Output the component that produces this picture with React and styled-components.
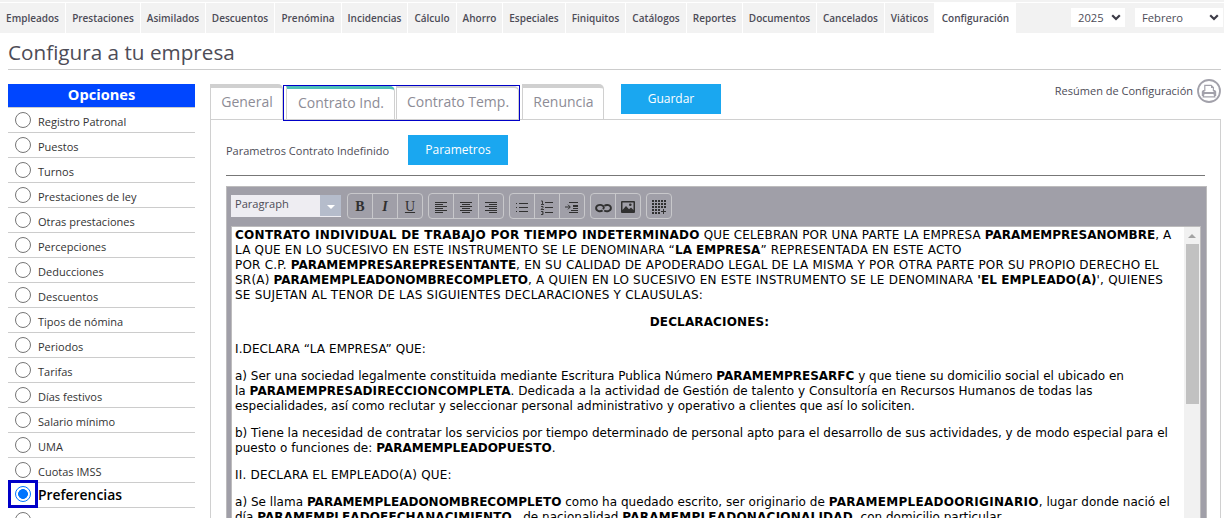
import React from "react";
import styled, { createGlobalStyle } from "styled-components";

const menu = [
    ['Empleados', 65], ['Prestaciones', 74], ['Asimilados', 64], ['Descuentos', 68],
    ['Prenómina', 66], ['Incidencias', 65], ['Cálculo', 48], ['Ahorro', 45],
    ['Especiales', 62], ['Finiquitos', 59], ['Catálogos', 60], ['Reportes', 55],
    ['Documentos', 73], ['Cancelados', 67], ['Viáticos', 49], ['Configuración', 81],
];

const options = [
    'Registro Patronal', 'Puestos', 'Turnos', 'Prestaciones de ley', 'Otras prestaciones',
    'Percepciones', 'Deducciones', 'Descuentos', 'Tipos de nómina', 'Periodos', 'Tarifas',
    'Días festivos', 'Salario mínimo', 'UMA', 'Cuotas IMSS', 'Preferencias', '',
];

const Arrow = () => (
    <svg width="10" height="7" viewBox="0 0 10 7">
        <path d="M1.2 1.2L5 5L8.8 1.2" fill="none" stroke="#3d3c47" strokeWidth="2.2" />
    </svg>
);

const Printer = () => (
    <svg width="24" height="24" viewBox="0 0 24 24">
        <circle cx="12" cy="12" r="11" fill="#fff" stroke="#a2a1aa" strokeWidth="1.8" />
        <path d="M7.8 12V6.3h6.4l2.2 2.2V12" fill="#fff" stroke="#a2a1aa" strokeWidth="1.2" />
        <path d="M14 6v3h3z" fill="#a2a1aa" />
        <path d="M6 11h1.5v2h9v-2H18l1.2 1.5V17H4.8v-4.5z" fill="#a2a1aa" />
        <path d="M7 14.5h10l.8 3.3H6.2z" fill="#fff" stroke="#a2a1aa" strokeWidth="1.2" />
    </svg>
);

const lines = (rows) => rows.map(([x, y, w]) => <rect key={y} x={x} y={y} width={w} height="1" />);

const icons = {
    left: lines([[1, 2, 12], [1, 4, 8], [1, 6, 12], [1, 8, 8], [1, 10, 12], [1, 12, 8]]),
    center: lines([[1, 2, 12], [3, 4, 8], [1, 6, 12], [3, 8, 8], [1, 10, 12], [3, 12, 8]]),
    right: lines([[1, 2, 12], [5, 4, 8], [1, 6, 12], [5, 8, 8], [1, 10, 12], [5, 12, 8]]),
    bullets: <>{lines([[4, 3, 9], [4, 7, 9], [4, 11, 9]])}<path d="M1 3h1v1H1zM1 7h1v1H1zM1 11h1v1H1z" /></>,
    numbers: (
        <>
            {lines([[5, 2, 8], [5, 7, 8], [5, 12, 8]])}
            <path d="M1 1h1.5v3M1 4.5h3M1 6.5h2v1L1 9.5h3M1 11.5h2v1.5H2M3 13v1.5H1" fill="none" stroke="#303030" strokeWidth=".9" />
        </>
    ),
    indent: (
        <>
            {lines([[4, 2, 9], [8, 8, 5], [6, 10, 7], [4, 12, 9]])}
            <path d="M0 7h5M3 4.7L5.3 7L3 9.3" fill="none" stroke="#303030" />
            <rect x="8" y="5" width="5" height="2" />
        </>
    ),
    link: (
        <g fill="none" stroke="#303030" strokeWidth="1.9">
            <path d="M6.6 10.4C4.4 11.9 .1 11.4 .1 8.1C.1 4.8 4.6 4.2 6.8 5.8C8.2 6.9 8.2 8.1 6.8 9" />
            <path d="M8.4 5.8C10.6 4.3 14.9 4.8 14.9 8.1C14.9 11.4 10.4 12 8.2 10.4" />
        </g>
    ),
    image: (
        <>
            <path fillRule="evenodd" d="M1 1h12a1 1 0 0 1 1 1v10a1 1 0 0 1-1 1H1a1 1 0 0 1-1-1V2a1 1 0 0 1 1-1zM1.5 2.5V10L5 6l3 3.2L10 7.5l2.5 2.5V2.5z" />
            <circle cx="9.3" cy="4.8" r="1.3" />
        </>
    ),
    table: (
        <>
            {[0, 3, 6, 9, 12].map((y) => [0, 3, 6, 9, 12].map((x) => (
                (x > 8 && y > 8) ? null : <rect key={`${x}-${y}`} x={x} y={y} width="2" height="2" />
            )))}
            <path d="M9 11h5v1H9zM11 9h1v5h-1z" />
        </>
    ),
};

const Icon = ({ name }) => (
    <svg width="14" height="14" viewBox="0 0 14 14" fill="#303030" overflow="visible">{icons[name]}</svg>
);

const groups = [['left', 'center', 'right'], ['bullets', 'numbers', 'indent'], ['link', 'image'], ['table']];

export default function App() {
    return (
        <Page>
            <GlobalStyle />
            <Menu>
                {menu.map(([name, width]) => (
                    <MenuItem key={name} $width={width} $active={name === 'Configuración'}>{name}</MenuItem>
                ))}
                <Selects>
                    <Select $width={54}>2025<Arrow /></Select>
                    <Select $width={88}>Febrero<Arrow /></Select>
                </Selects>
            </Menu>
            <Title>Configura a tu empresa</Title>
            <Body>
                <Sidebar>
                    <SidebarTitle>Opciones</SidebarTitle>
                    {options.map((name) => {
                        const active = name === 'Preferencias';
                        return (
                            <Option key={name}>
                                <RadioFrame $active={active}><Radio $active={active} /></RadioFrame>
                                <OptionName $active={active}>{name}</OptionName>
                            </Option>
                        );
                    })}
                </Sidebar>
                <Content>
                    <TabBar>
                        <Tab $width={73}>General</Tab>
                        <Marked>
                            <Tab $width={109} $active>Contrato Ind.</Tab>
                            <Tab $width={123} $short>Contrato Temp.</Tab>
                        </Marked>
                        <Tab $width={82}>Renuncia</Tab>
                        <Button $left={17}>Guardar</Button>
                        <Summary>Resúmen de Configuración<Printer /></Summary>
                    </TabBar>
                    <Panel>
                        <Params>
                            <ParamsLabel>Parametros Contrato Indefinido</ParamsLabel>
                            <Button $left={18}>Parametros</Button>
                        </Params>
                        <Editor>
                            <Toolbar>
                                <Format>
                                    <FormatName>Paragraph</FormatName>
                                    <FormatArrow><Triangle /></FormatArrow>
                                </Format>
                                <Group>
                                    <Tool><Bold>B</Bold></Tool>
                                    <Tool><Italic>I</Italic></Tool>
                                    <Tool><Underline>U</Underline></Tool>
                                </Group>
                                {groups.map((group) => (
                                    <Group key={group[0]}>
                                        {group.map((name) => <Tool key={name}><Icon name={name} /></Tool>)}
                                    </Group>
                                ))}
                            </Toolbar>
                            <Document>
                                <Text>
                                    <Paragraph>
                                        <Line $spacing={0.12}><Strong $spacing={0.28}>CONTRATO INDIVIDUAL DE TRABAJO POR TIEMPO INDETERMINADO</Strong> QUE CELEBRAN POR UNA PARTE LA EMPRESA <Strong>PARAMEMPRESANOMBRE</Strong>, A</Line>
                                        <Line $spacing={0.18}>LA QUE EN LO SUCESIVO EN ESTE INSTRUMENTO SE LE DENOMINARA “<Strong>LA EMPRESA</Strong>” REPRESENTADA EN ESTE ACTO</Line>
                                        <Line $spacing={0.2}>POR C.P. <Strong>PARAMEMPRESAREPRESENTANTE</Strong>, EN SU CALIDAD DE APODERADO LEGAL DE LA MISMA Y POR OTRA PARTE POR SU PROPIO DERECHO EL</Line>
                                        <Line $spacing={0.21}>SR(A) <Strong>PARAMEMPLEADONOMBRECOMPLETO</Strong>, A QUIEN EN LO SUCESIVO EN ESTE INSTRUMENTO SE LE DENOMINARA <Strong $spacing={0.08}>'EL EMPLEADO(A)</Strong>', QUIENES</Line>
                                        <Line $spacing={0.23}>SE SUJETAN AL TENOR DE LAS SIGUIENTES DECLARACIONES Y CLAUSULAS:</Line>
                                    </Paragraph>
                                    <Paragraph $center>
                                        <Line><Strong $spacing={0.14}>DECLARACIONES:</Strong></Line>
                                    </Paragraph>
                                    <Paragraph>
                                        <Line $spacing={0.11}>I.DECLARA “LA EMPRESA” QUE:</Line>
                                    </Paragraph>
                                    <Paragraph>
                                        <Line>a) Ser una sociedad legalmente constituida mediante Escritura Publica Número <Strong>PARAMEMPRESARFC</Strong> y que tiene su domicilio social el ubicado en</Line>
                                        <Line $spacing={0.03}>la <Strong $spacing={0.1}>PARAMEMPRESADIRECCIONCOMPLETA</Strong>. Dedicada a la actividad de Gestión de talento y Consultoría en Recursos Humanos de todas las</Line>
                                        <Line $spacing={-0.02}>especialidades, así como reclutar y seleccionar personal administrativo y operativo a clientes que así lo soliciten.</Line>
                                    </Paragraph>
                                    <Paragraph>
                                        <Line>b) Tiene la necesidad de contratar los servicios por tiempo determinado de personal apto para el desarrollo de sus actividades, y de modo especial para el</Line>
                                        <Line $spacing={0.03}>puesto o funciones de: <Strong>PARAMEMPLEADOPUESTO</Strong>.</Line>
                                    </Paragraph>
                                    <Paragraph>
                                        <Line $spacing={0.2}>II. DECLARA EL EMPLEADO(A) QUE:</Line>
                                    </Paragraph>
                                    <Paragraph>
                                        <Line $spacing={0.03}>a) Se llama <Strong>PARAMEMPLEADONOMBRECOMPLETO</Strong> como ha quedado escrito, ser originario de <Strong $spacing={0.3}>PARAMEMPLEADOORIGINARIO</Strong>, lugar donde nació el</Line>
                                        <Line>día <Strong $spacing={0.1}>PARAMEMPLEADOFECHANACIMIENTO</Strong> , de nacionalidad <Strong $spacing={0.22}>PARAMEMPLEADONACIONALIDAD</Strong>, con domicilio particular</Line>
                                    </Paragraph>
                                </Text>
                                <Scrollbar><ScrollArrow /><Thumb /></Scrollbar>
                            </Document>
                        </Editor>
                    </Panel>
                </Content>
            </Body>
        </Page>
    );
}

const GlobalStyle = createGlobalStyle`
    * { box-sizing: border-box; }
    body {
        margin: 0;
        overflow: hidden;
        background: #fff;
        font-family: "Open Sans", sans-serif;
        color: #4d4c57;
    }
    svg { display: block; flex: none; }
`;

const Page = styled.div`
    width: 1224px;
    height: 518px;
    overflow: hidden;
    border-top: 2px solid #f2f2f2;
`;

const Menu = styled.nav`
    display: flex;
    gap: 1px;
    height: 30px;
    margin-top: 1px;
    background: linear-gradient(90deg, #fff 1000px, #f2f2f2 1000px);
`;

const MenuItem = styled.div`
    width: ${p => p.$width}px;
    flex: none;
    background: ${p => p.$active ? '#fff' : '#f2f2f2'};
    font-size: 10px;
    font-weight: 600;
    line-height: 31px;
    text-align: center;
    white-space: nowrap;
`;

const Selects = styled.div`
    display: flex;
    gap: 10px;
    margin-left: auto;
    padding: 5px 1px 0 0;
`;

const Select = styled.div`
    display: flex;
    align-items: center;
    justify-content: space-between;
    width: ${p => p.$width}px;
    height: 19px;
    padding: 0 4px 0 7px;
    background: #fff;
    font-size: 11.2px;
`;

const Title = styled.h1`
    height: 37px;
    margin: 0 3px 14px 8px;
    border-bottom: 1px solid #ccc;
    font-size: 20.7px;
    font-weight: 400;
    line-height: 39px;
`;

const Body = styled.div`
    display: flex;
    gap: 15px;
    padding: 0 3px 0 8px;
`;

const Sidebar = styled.aside`
    width: 187px;
    flex: none;
`;

const SidebarTitle = styled.div`
    height: 24px;
    background: #0046ff;
    border-bottom: 1px solid #ccc;
    color: #fff;
    font-size: 14.6px;
    font-weight: 700;
    line-height: 21px;
    text-align: center;
`;

const Option = styled.div`
    display: flex;
    height: 25px;
    border-bottom: 1px solid #ccc;
`;

const RadioFrame = styled.div`
    display: flex;
    align-items: center;
    justify-content: center;
    width: 30px;
    height: ${p => p.$active ? 28 : 24}px;
    margin-top: ${p => p.$active ? -3 : 0}px;
    border: ${p => p.$active ? '3px solid #0000c8' : 'none'};
    z-index: 1;
`;

const Radio = styled.div`
    width: 16px;
    height: 16px;
    flex: none;
    border: 1px solid ${p => p.$active ? '#0075ff' : '#767676'};
    border-radius: 50%;
    background: ${p => p.$active ? 'radial-gradient(#0075ff 4.6px, #fff 5.2px)' : '#fff'};
`;

const OptionName = styled.div`
    font-size: ${p => p.$active ? 13.9 : 11}px;
    font-weight: ${p => p.$active ? 600 : 400};
    color: ${p => p.$active ? '#000' : '#333'};
    line-height: ${p => p.$active ? 23 : 28}px;
`;

const Content = styled.main`
    width: 1011px;
    flex: none;
`;

const TabBar = styled.div`
    display: flex;
    height: 36px;
`;

const Marked = styled.div`
    display: flex;
    height: 36px;
    gap: 1px;
    width: 237px;
    margin-right: 2px;
    padding: 0 0 0 2px;
    border: 1px solid #0000c8;
    margin-top: 1px;
    z-index: 1;
`;

const Tab = styled.div`
    width: ${p => p.$width}px;
    flex: none;
    height: ${p => p.$active || p.$short ? 34 : 35}px;
    padding-left: 1px;
    border: 1px solid #d0d0d0;
    border-top: ${p => p.$active ? '3px solid #4ebfb8' : `${p.$short ? 2 : 4}px solid #d0d0d0`};
    border-bottom: 0;
    border-radius: 0 5px 0 0;
    color: #8d8c96;
    font-size: 14px;
    line-height: 27px;
    text-align: center;
`;

const Button = styled.div`
    width: 100px;
    height: 30px;
    margin-left: ${p => p.$left}px;
    background: #1aa7f0;
    color: #fff;
    font-size: 12px;
    font-weight: 500;
    line-height: 29px;
    text-align: center;
`;

const Summary = styled.div`
    display: flex;
    gap: 4px;
    margin: -5px 0 0 auto;
    height: 24px;
    font-size: 11px;
    line-height: 24px;
`;

const Panel = styled.section`
    height: 420px;
    margin-top: -1px;
    padding: 15px 13px 0 15px;
    border: 1px solid #d0d0d0;
    border-bottom: 0;
`;

const Params = styled.div`
    display: flex;
    width: 979px;
    height: 41px;
    margin-bottom: 10px;
    border-bottom: 1px solid #777;
`;

const ParamsLabel = styled.div`
    width: 164px;
    font-size: 11px;
    line-height: 32px;
    white-space: nowrap;
`;

const Editor = styled.div`
    width: 981px;
    padding: 6px 4px;
    border: 1px solid #bdbcbd;
    background: #a09fa8;
`;

const Toolbar = styled.div`
    display: flex;
    gap: 5px;
    height: 33px;
`;

const Format = styled.div`
    display: flex;
    width: 110px;
    height: 22px;
    margin: 2px 1px 0 0;
    background: #eeedf2;
`;

const FormatName = styled.div`
    width: 89px;
    padding-left: 4px;
    font-size: 11.1px;
    line-height: 18px;
`;

const FormatArrow = styled.div`
    display: flex;
    align-items: center;
    justify-content: center;
    width: 21px;
    height: 21px;
    padding-top: 3px;
    background: #b5bccb;
`;

const Triangle = styled.div`
    border: 4px solid transparent;
    border-top-color: #fff;
    border-bottom: 0;
`;

const Group = styled.div`
    display: flex;
    height: 26px;
    border: 1px solid #c8c8cb;
    border-radius: 4px;
`;

const Tool = styled.div`
    display: flex;
    align-items: center;
    justify-content: center;
    width: 24px;
    padding-top: 2px;

    & + & {
        width: 25px;
        border-left: 1px solid #c8c8cb;
    }
`;

const Bold = styled.span`
    font: bold 14px "Liberation Serif", serif;
    color: #303030;
`;

const Italic = styled(Bold)`
    font-style: italic;
`;

const Underline = styled(Bold)`
    font-weight: 400;
    text-decoration: underline;
`;

const Document = styled.div`
    display: flex;
    width: 970px;
    height: 320px;
    border: 1px solid #bdbcbd;
    background: #fff;
`;

const Text = styled.div`
    width: 952px;
    padding: 1px 0 0 3px;
    color: #000;
    font-family: "DejaVu Sans", sans-serif;
    font-size: 12px;
    line-height: 15px;
`;

const Paragraph = styled.div`
    margin-bottom: 12px;
    text-align: ${p => p.$center ? 'center' : 'left'};
`;

const Line = styled.div`
    white-space: nowrap;
    letter-spacing: ${p => p.$spacing || 0}px;
`;

const Strong = styled.b`
    letter-spacing: ${p => p.$spacing || 0}px;
`;

const Scrollbar = styled.div`
    width: 16px;
    background: #f1f1f1;
`;

const ScrollArrow = styled.div`
    width: 8px;
    margin: 7px auto 6px;
    border: 4px solid transparent;
    border-top: 0;
    border-bottom-color: #a3a3a3;
`;

const Thumb = styled.div`
    width: 13px;
    height: 160px;
    margin: 0 auto;
    background: #c1c1c1;
`;
